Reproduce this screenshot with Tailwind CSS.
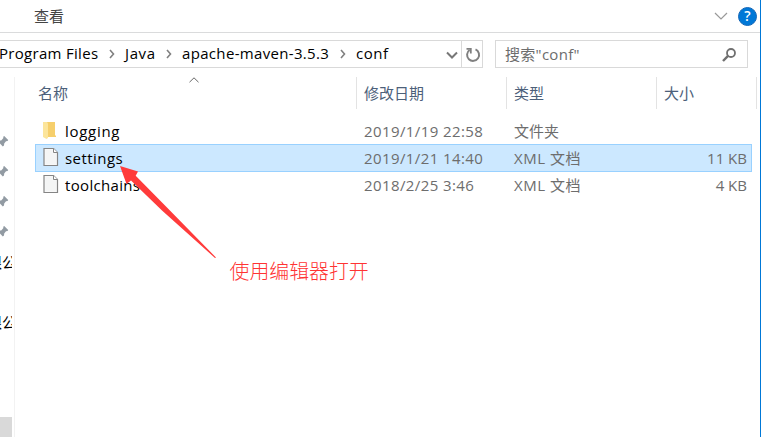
<!DOCTYPE html>
<html lang="zh-CN">
<head>
<meta charset="utf-8">
<title>conf</title>
<script src="https://cdn.jsdelivr.net/npm/@tailwindcss/browser@4"></script>
</head>
<body class="bg-white">
<svg class="hidden">
  <symbol id="pin" viewBox="0 0 12 14"><path d="M4.2 1 8.2 5 7.6 6 6 6.2 4.2 8.4 4 10.6 2.8 11.6-2 6.4-1 5.6 1.2 5.4 3.2 3.2 3.4 1.6Z" fill="#929ba3"/></symbol>
  <symbol id="file" viewBox="0 0 16 20"><path d="M1 1.5H10.5L14.5 5.5V18.5H1Z" fill="#f8f8f8" stroke="#858585" stroke-width="1.2"/><path d="M2.5 3H9.5V6.5H13V17H2.5Z" fill="#f4f5f5"/><path d="M10.5 1.5V5.5H14.5" fill="#fff" stroke="#858585"/></symbol>
  <symbol id="sep" viewBox="0 0 6 10"><path d="M1 1 4.5 5 1 9" fill="none" stroke="#808080" stroke-width="1.6"/></symbol>
</svg>
<div class="relative flex h-[437px] w-[762px] overflow-hidden bg-white text-[15px] font-['Open_Sans','Noto_Sans_CJK_SC',sans-serif] whitespace-nowrap">
  <div class="flex w-[760px] shrink-0 flex-col">
    <div class="flex h-8 shrink-0 items-center pl-[34px] pr-[3px] text-[#444]">
      <span class="leading-8">查看</span>
      <svg class="ml-auto" width="14" height="8" viewBox="0 0 14 8"><path d="M1 1 7 7 13 1" fill="none" stroke="#999" stroke-width="1.2"/></svg>
      <div class="ml-2.5 flex size-[19px] items-center justify-center rounded-full border border-[#1467b8] bg-[#0078d7] text-[14px] leading-none font-semibold text-white">?</div>
    </div>
    <div class="h-px shrink-0 bg-[#dadbdc]"></div>
    <div class="mt-[7px] flex h-7 shrink-0">
      <div class="flex w-[483px] border border-l-0 border-[#d9d9d9] text-black">
        <div class="flex w-[461px] items-center pr-[3px]">
          <span class="-ml-px w-[100px] pb-0.5 tracking-[0.3px]">Program Files</span>
          <svg class="ml-[10px]" width="6" height="10"><use href="#sep"/></svg>
          <span class="ml-[10px] w-[31px] pb-0.5 tracking-[0.6px]">Java</span>
          <svg class="ml-[10px]" width="6" height="10"><use href="#sep"/></svg>
          <span class="ml-[10px] w-[148px] pb-0.5 tracking-[0.33px]">apache-maven-3.5.3</span>
          <svg class="ml-[10px]" width="6" height="10"><use href="#sep"/></svg>
          <span class="ml-[10px] pb-0.5 tracking-[0.5px]">conf</span>
          <svg class="mt-0.5 ml-auto" width="12" height="8" viewBox="0 0 12 8"><path d="M1 1.5 6 6.5 11 1.5" fill="none" stroke="#777" stroke-width="2"/></svg>
        </div>
        <div class="flex flex-1 items-center justify-center border-l border-[#d9d9d9] pt-px pl-px">
          <svg width="16" height="16" viewBox="0 0 16 16"><path d="M10.5 2.4A6 6 0 1 1 4.6 3" fill="none" stroke="#808080" stroke-width="2"/><path d="M1.5 1.8H5.8V6.4" fill="none" stroke="#808080" stroke-width="1.8"/></svg>
        </div>
      </div>
      <div class="ml-3 flex w-[253px] items-center border border-[#d9d9d9] pr-[11px] pl-[9px] text-[#6d6d6d]">
        <span class="tracking-[0.3px]">搜索"conf"</span>
        <svg class="mt-px ml-auto" width="14" height="14" viewBox="0 0 14 14"><circle cx="9" cy="5" r="4" fill="none" stroke="#707070" stroke-width="1.8"/><path d="M6.3 7.7 1 13" stroke="#707070" stroke-width="2.4"/></svg>
      </div>
    </div>
    <div class="mt-[9px] flex h-[360px] shrink-0">
      <div class="flex w-[14px] shrink-0 flex-col overflow-hidden text-black">
        <svg class="mt-[58px] shrink-0" width="12" height="14"><use href="#pin"/></svg>
        <svg class="mt-4 shrink-0" width="12" height="14"><use href="#pin"/></svg>
        <svg class="mt-4 shrink-0" width="12" height="14"><use href="#pin"/></svg>
        <svg class="mt-4 shrink-0" width="12" height="14"><use href="#pin"/></svg>
        <div class="mt-[13px] flex h-5 w-3 shrink-0 overflow-hidden leading-5"><span class="-ml-[13px]">限公</span></div>
        <div class="mt-10 flex h-5 w-3 shrink-0 overflow-hidden leading-5"><span class="-ml-[13px]">限公</span></div>
        <div class="mt-[85px] h-5 w-3 shrink-0 bg-[#d9d9d9]"></div>
      </div>
      <div class="w-px bg-[#f2f2f2]"></div>
      <div class="flex flex-1 flex-col">
        <div class="relative flex h-8 items-center text-[#4c607a]">
          <svg class="absolute top-0 left-[174px]" width="10" height="6" viewBox="0 0 10 6"><path d="M.5 5.2 5 .8 9.5 5.2" fill="none" stroke="#666"/></svg>
          <span class="w-[341px] pl-[23px]">名称</span>
          <span class="flex h-8 w-[150px] items-center border-l border-[#e3e3e3] pl-[7px]">修改日期</span>
          <span class="flex h-8 w-[150px] items-center border-l border-[#e3e3e3] pl-[7px]">类型</span>
          <span class="flex h-8 w-[101px] items-center border-x border-[#e3e3e3] pl-[7px]">大小</span>
        </div>
        <div class="ml-5 flex h-[35px] w-[717px] items-center pt-[9px] pl-2 text-[#6d6d6d]">
          <svg class="-mt-0.5" width="13" height="17" viewBox="0 0 13 17"><path d="M4 0H12V13.5H13V15H4Z" fill="#f6cf6c"/><path d="M0 0H4L5 1.5V16L3.5 17 0 15Z" fill="#fce59b"/></svg>
          <span class="ml-[9px] w-[299px] tracking-[0.7px] text-black">logging</span><span class="w-[150px] tracking-[0.4px]">2019/1/19 22:58</span><span>文件夹</span>
        </div>
        <div class="ml-5 flex h-7 w-[717px] items-center border border-[#99d1ff] bg-[#cce8ff] pr-1 pl-[7px] text-[#6d6d6d]">
          <svg class="-mt-0.5" width="16" height="20"><use href="#file"/></svg>
          <span class="ml-1.5 w-[299px] tracking-[0.45px] text-black">settings</span><span class="w-[150px] tracking-[0.4px]">2019/1/21 14:40</span><span class="tracking-[0.5px]">XML 文档</span><span class="ml-auto">11 KB</span>
        </div>
        <div class="ml-5 flex h-[26px] w-[717px] items-center pr-[5px] pl-2 text-[#6d6d6d]">
          <svg class="-mt-0.5" width="16" height="20"><use href="#file"/></svg>
          <span class="ml-1.5 w-[299px] tracking-[0.33px] text-black">toolchains</span><span class="w-[150px] tracking-[0.4px]">2018/2/25 3:46</span><span class="tracking-[0.5px]">XML 文档</span><span class="ml-auto">4 KB</span>
        </div>
      </div>
    </div>
  </div>
  <div class="w-px bg-[#0078d7]"></div>
  <svg class="absolute top-[165px] left-[119px]" width="98" height="94" viewBox="0 0 98 94"><path d="M1 1 19 6.5 16.7 10.8 47 41.5 97 92.5 96 93 43 45.5 12 15.5 7.5 19Z" fill="#ff3b3b"/></svg>
  <div class="absolute top-[259px] left-[229.5px] text-[19.9px] leading-[26px] font-light text-[#ff3333]">使用编辑器打开</div>
</div>
</body>
</html>
